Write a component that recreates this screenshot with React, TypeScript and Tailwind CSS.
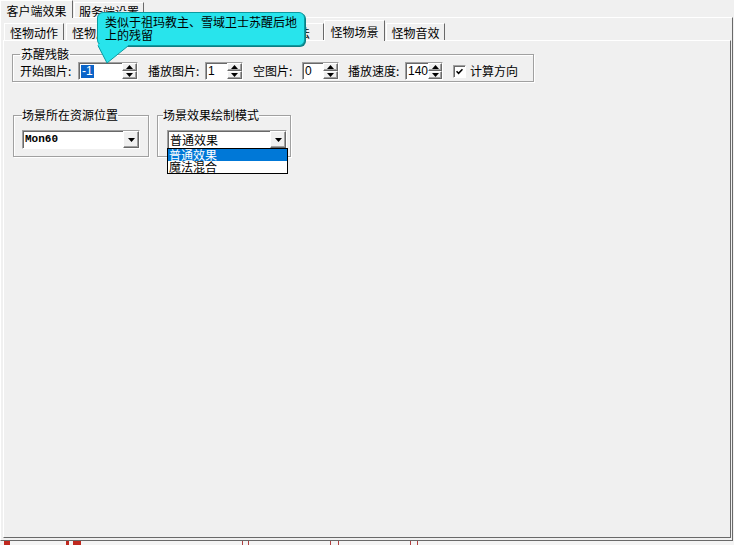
import type { ReactNode } from 'react'

// classic Win32 look: raised / sunken bevels
const raised = 'border border-t-white border-l-white border-r-[#696969] border-b-[#696969] shadow-[inset_-1px_-1px_0_#a0a0a0]'
const sunken = 'border border-t-[#a0a0a0] border-l-[#a0a0a0] border-r-white border-b-white shadow-[inset_1px_1px_0_#696969]'
const etched = 'border border-[#a0a0a0] shadow-[inset_1px_1px_0_#fff,1px_1px_0_#fff]'

function OuterTab({ label, active }: { label: string; active?: boolean }) {
  if (active) {
    return (
      <div className="relative z-10 -mb-px flex h-[18px] w-[73px] items-start justify-center border-l border-t border-r border-t-white border-l-white border-r-[#696969] bg-[#f0f0f0] pt-[3px] leading-[13px]">
        {label}
      </div>
    )
  }
  return (
    <div className="ml-px flex h-[15px] w-[70px] items-start justify-center border-l border-t border-r border-t-white border-l-white border-r-[#696969] pt-[2px] leading-[13px]">
      {label}
    </div>
  )
}

function InnerTab({ label, w, active }: { label: string; w: string; active?: boolean }) {
  if (active) {
    return (
      <div className={`relative z-10 -mb-px flex h-[21px] items-start justify-center border-l border-t border-r border-t-white border-l-white border-r-[#696969] bg-[#f0f0f0] pt-[4px] leading-[13px] ${w}`}>
        {label}
      </div>
    )
  }
  return (
    <div className={`flex h-[17px] items-start justify-center overflow-hidden whitespace-nowrap border-l border-t border-r border-t-white border-l-white border-r-[#696969] pt-[2px] leading-[13px] ${w}`}>
      {label}
    </div>
  )
}

function Arrow({ up }: { up?: boolean }) {
  return (
    <svg width="7" height="4" viewBox="0 0 7 4">
      <path d={up ? 'M0 4H7L3.5 0Z' : 'M0 0H7L3.5 4Z'} fill="#000" />
    </svg>
  )
}

function Spin({ value, w, picked }: { value: string; w: string; picked?: boolean }) {
  return (
    <div className={`flex h-[18px] bg-white ${sunken} ${w}`}>
      <div className="flex flex-1 items-center pl-[2px] font-['Liberation_Sans',Arial,sans-serif] text-[12px] leading-[13px]">
        {picked ? <span className="bg-[#0a64c8] px-px text-white">{value}</span> : <span>{value}</span>}
      </div>
      <div className="flex w-[15px] flex-col">
        <div className={`flex flex-1 items-end justify-center bg-[#f0f0f0] pb-px ${raised}`}>
          <Arrow up />
        </div>
        <div className={`flex flex-1 items-start justify-center bg-[#f0f0f0] pt-px ${raised}`}>
          <Arrow />
        </div>
      </div>
    </div>
  )
}

function Combo({ children, w }: { children: ReactNode; w: string }) {
  return (
    <div className={`flex h-[19px] bg-white ${sunken} ${w}`}>
      <div className="flex flex-1 items-center pl-[2px]">{children}</div>
      <div className={`flex w-[16px] items-center justify-center bg-[#f0f0f0] pt-px ${raised}`}>
        <Arrow />
      </div>
    </div>
  )
}

function Label({ text, w }: { text: string; w: string }) {
  return <div className={`leading-[14px] ${w}`}>{text}</div>
}

export default function App() {
  return (
    <div className="relative flex h-[545px] w-[734px] flex-col overflow-hidden bg-[#f0f0f0] font-['Noto_Sans_CJK_SC','Noto_Sans',sans-serif] text-[12px] text-black">
      {/* outer tab strip */}
      <div className="flex h-[17px] items-end">
        <OuterTab label="客户端效果" active />
        <OuterTab label="服务端设置" />
      </div>

      <div className={`flex h-[524px] w-[733px] flex-col pb-[2px] pl-[2px] pr-px ${raised} shadow-none`}>
        {/* inner tab strip */}
        <div className="flex h-[22px] items-end pl-px">
          <InnerTab label="怪物动作" w="w-[60px]" />
          <div className="w-[2px]" />
          <InnerTab label="怪物属性" w="w-[60px]" />
          <InnerTab label="怪物攻击" w="w-[61px]" />
          <InnerTab label="怪物受击" w="w-[61px]" />
          <InnerTab label="怪物魔法" w="w-[76px]" />
          <InnerTab label="怪物场景" w="w-[61px]" active />
          <div className="w-px" />
          <InnerTab label="怪物音效" w="w-[59px]" />
        </div>

        <div className={`flex-1 ${raised} shadow-none pl-[8px] pt-[7px]`}>
          <fieldset className={`w-[522px] pb-px pl-[7px] ${etched}`}>
            <legend className="px-px leading-[12px]">苏醒残骸</legend>
            <div className="mt-[2px] flex items-center">
              <Label text="开始图片:" w="w-[58px]" />
              <Spin value="-1" w="w-[60px]" picked />
              <div className="w-[10px]" />
              <Label text="播放图片:" w="w-[57px]" />
              <Spin value="1" w="w-[38px]" />
              <div className="w-[10px]" />
              <Label text="空图片:" w="w-[49px]" />
              <Spin value="0" w="w-[37px]" />
              <div className="w-[9px]" />
              <Label text="播放速度:" w="w-[57px]" />
              <Spin value="140" w="w-[38px]" />
              <div className="w-[10px]" />
              <div className={`flex h-[13px] w-[13px] items-center justify-center bg-white ${sunken}`}>
                <svg width="7" height="7" viewBox="0 0 7 7">
                  <path d="M0.5 3.2L2.6 5.4L6.5 1.2" stroke="#000" strokeWidth="1.6" fill="none" />
                </svg>
              </div>
              <div className="ml-[4px] leading-[14px]">计算方向</div>
            </div>
          </fieldset>

          <div className="mt-[27px] flex items-start">
            <fieldset className={`ml-px w-[136px] pb-[7px] pl-[8px] ${etched}`}>
              <legend className="leading-[12px]">场景所在资源位置</legend>
              <div className="mt-[9px]">
                <Combo w="w-[118px]">
                  <span className="font-['Liberation_Mono',monospace] text-[11px] font-bold leading-[13px]">Mon60</span>
                </Combo>
              </div>
            </fieldset>

            <fieldset className={`ml-[8px] w-[134px] pb-[7px] pl-[5px] ${etched}`}>
              <legend className="leading-[12px]">场景效果绘制模式</legend>
              <div className="relative ml-[4px] mt-[9px]">
                <Combo w="w-[120px]">
                  <span className="leading-[14px]">普通效果</span>
                </Combo>
                {/* open drop-down list */}
                <div className="absolute left-0 top-[18px] z-20 w-[121px] border border-black bg-white">
                  <div className="h-[12px] bg-[#0078d7] pl-[1px] leading-[12px] text-white">普通效果</div>
                  <div className="h-[12px] pl-[1px] leading-[12px]">魔法混合</div>
                </div>
              </div>
            </fieldset>
          </div>
        </div>
      </div>

      {/* strip of the desk below the window */}
      <div className="flex flex-1 items-start gap-[1px] bg-[#f4f4f4] pl-[4px]">
        <div className="h-[4px] w-[6px] bg-[#c0281e]" />
        <div className="ml-[55px] h-[4px] w-[3px] bg-[#c0281e]" />
        <div className="ml-[3px] h-[4px] w-[8px] bg-[#c0281e]" />
        <div className="ml-[160px] h-[4px] w-px bg-[#b04040]" />
        <div className="ml-[4px] h-[4px] w-px bg-[#b04040]" />
        <div className="ml-[80px] h-[4px] w-px bg-[#b04040]" />
        <div className="ml-[6px] h-[4px] w-px bg-[#b04040]" />
        <div className="ml-[70px] h-[4px] w-px bg-[#b04040]" />
        <div className="ml-[5px] h-[4px] w-px bg-[#b04040]" />
      </div>

      {/* balloon tooltip */}
      <div className="absolute left-[97px] top-[12px] z-30 h-[34px] w-[208px] rounded-[6px] border border-[#0d9aa0] bg-[#28e4ec] pl-[7px] pt-[2px] text-left leading-[13px] shadow-[1px_1px_0_#0a7f84]">
        类似于祖玛教主、雪域卫士苏醒后地
        <br />
        上的残留
      </div>
      <svg className="absolute left-[97px] top-[44px] z-30" width="34" height="21" viewBox="0 0 34 21">
        <path d="M1 0V2L10 19L31 2V0Z" fill="#28e4ec" />
        <path d="M1 1.5L10 19L31 2" stroke="#0d9aa0" strokeWidth="1" fill="none" />
      </svg>
    </div>
  )
}
